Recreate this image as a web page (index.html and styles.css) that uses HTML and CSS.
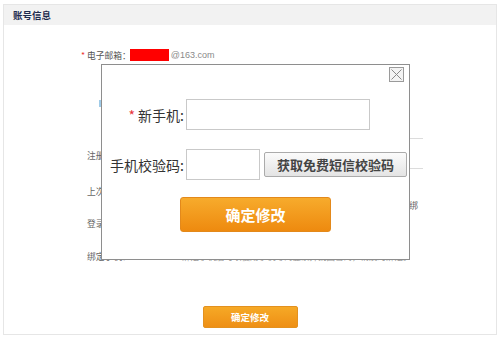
FILE: index.html
```html
<!DOCTYPE html>
<html lang="zh-CN">
<head>
<meta charset="utf-8">
<title>账号信息</title>
<link rel="stylesheet" href="styles.css">
</head>
<body>
<div class="panel">
  <div class="panel-head">账号信息</div>
  <div class="panel-body">
    <div class="row row-email">
      <span class="req">*</span><span class="label">电子邮箱：</span><span class="mask"></span><span class="mail">@163.com</span>
    </div>
    <div class="row row-phone">
      <span class="blue-mark"></span>
    </div>
    <div class="row row-reg">
      <span class="label">注册时间</span>
      <div class="value-box"></div>
    </div>
    <div class="row row-last">
      <span class="label">上次登录</span>
      <div class="value-note">登录后请及时绑</div>
    </div>
    <div class="row row-login">
      <span class="label">登录次数</span>
    </div>
    <div class="row row-bind">
      <span class="label">绑定手机：</span>
      <span class="value-text">绑定手机后可以使用手机号码登录并找回密码，请及时绑定。</span>
    </div>
    <div class="actions">
      <button class="btn-submit" type="button">确定修改</button>
    </div>
  </div>

  <div class="modal">
    <button class="modal-close" type="button" aria-label="关闭">
      <svg width="13" height="13" viewBox="0 0 13 13"><path d="M1.5 1.5 L11.5 11.5 M11.5 1.5 L1.5 11.5" stroke="#8a8a8a" stroke-width="1" fill="none"/></svg>
    </button>
    <div class="modal-form">
      <div class="m-row">
        <label class="m-label"><span class="m-req">*</span> 新手机:</label>
        <input class="m-input m-input-wide" type="text">
      </div>
      <div class="m-row m-row-code">
        <label class="m-label">手机校验码:</label>
        <input class="m-input m-input-short" type="text">
        <button class="btn-sms" type="button">获取免费短信校验码</button>
      </div>
      <button class="btn-confirm" type="button">确定修改</button>
    </div>
  </div>
</div>
</body>
</html>
```
FILE: styles.css
```css
html, body {
  margin: 0;
  padding: 0;
  background: #fff;
  font-family: "Noto Sans CJK SC", "Liberation Sans", sans-serif;
}

.panel {
  position: relative;
  box-sizing: border-box;
  margin: 4px 3px 0;
  width: 494px;
  height: 331px;
  border: 1px solid #e6e6e6;
}

.panel-head {
  height: 20px;
  line-height: 20px;
  padding-left: 9px;
  background: #f2f2f2;
  color: #1d2b4f;
  font-size: 9.5px;
  font-weight: bold;
}

.panel-body {
  padding-left: 83px;
}

.row {
  display: flex;
  align-items: center;
  font-size: 8.75px;
  color: #666;
}

.row-email { margin-top: 20px; height: 20px; color: #555; }
.row-phone { height: 70px; }
.row-reg   { height: 40px; }
.row-last  { height: 32px; }
.row-login { height: 32px; }
.row-bind  { height: 34px; }

.req {
  color: #e33;
  margin-left: -6px;
  width: 6px;
}

.label {
  width: 95px;
  flex: none;
  white-space: nowrap;
}

.row-email .label { width: auto; margin-right: -1px; }

.mask {
  display: inline-block;
  width: 39px;
  height: 12px;
  background: #ff0000;
}

.mail {
  margin-left: 2px;
  color: #8a8a8a;
  font-family: "Liberation Sans", sans-serif;
  font-size: 9px;
}

.blue-mark {
  margin-left: 12px;
  margin-top: 6px;
  width: 2px;
  height: 7px;
  background: #9fcbe8;
}

.value-box {
  align-self: flex-start;
  margin-top: 3px;
  box-sizing: border-box;
  width: 241px;
  height: 31px;
  border-top: 1px solid #dcdcdc;
  border-bottom: 1px solid #dcdcdc;
}

.value-note {
  align-self: flex-end;
  margin-bottom: -5px;
  width: 236px;
  line-height: 12px;
  text-align: right;
  color: #666;
}

.value-text {
  color: #999;
  white-space: nowrap;
  font-size: 8.5px;
}

.actions {
  display: flex;
  justify-content: center;
  margin-top: 33px;
  margin-left: -83px;
}

.btn-submit {
  box-sizing: border-box;
  width: 95px;
  height: 22px;
  padding: 0;
  border: 1px solid #e3911f;
  border-radius: 2px;
  background: linear-gradient(#f6a926, #ee8f15);
  color: #fff;
  font-family: "Noto Sans CJK SC", sans-serif;
  font-size: 9.5px;
  font-weight: bold;
}

/* Modal overlay */
.modal {
  position: absolute;
  left: 97px;
  top: 59px;
  box-sizing: border-box;
  width: 309px;
  height: 196px;
  border: 1px solid #8e8e8e;
  background: #fff;
}

.modal-close {
  position: absolute;
  top: 2px;
  right: 5px;
  box-sizing: border-box;
  width: 15px;
  height: 15px;
  padding: 0;
  border: 1px solid #9a9a9a;
  background: #f3f3f3;
  display: flex;
  align-items: center;
  justify-content: center;
}

.modal-form {
  padding-top: 34px;
  display: flex;
  flex-direction: column;
}

.m-row {
  display: flex;
  align-items: center;
}

.m-row-code { margin-top: 19px; }

.m-label {
  box-sizing: border-box;
  width: 84px;
  padding-right: 2px;
  text-align: right;
  font-size: 14px;
  color: #333;
  white-space: nowrap;
}

.m-req {
  color: #e8343a;
}

.m-input {
  box-sizing: border-box;
  height: 31px;
  margin: 0;
  border: 1px solid #c9c9c9;
  background: #fff;
}

.m-input-wide { width: 184px; }
.m-input-short { width: 74px; }

.btn-sms {
  box-sizing: border-box;
  margin-left: 4px;
  width: 143px;
  height: 25px;
  padding: 0;
  border: 1px solid #ababab;
  border-radius: 2px;
  background: linear-gradient(#fbfbfb, #e4e4e4);
  color: #444;
  font-family: "Noto Sans CJK SC", sans-serif;
  font-size: 13px;
  font-weight: bold;
}

.btn-confirm {
  box-sizing: border-box;
  align-self: center;
  margin-top: 17px;
  width: 151px;
  height: 35px;
  padding: 0;
  border: 1px solid #e3891b;
  border-radius: 3px;
  background: linear-gradient(#f7ab2c, #ee8a0f);
  color: #fff;
  font-family: "Noto Sans CJK SC", sans-serif;
  font-size: 15px;
  font-weight: bold;
}
```
